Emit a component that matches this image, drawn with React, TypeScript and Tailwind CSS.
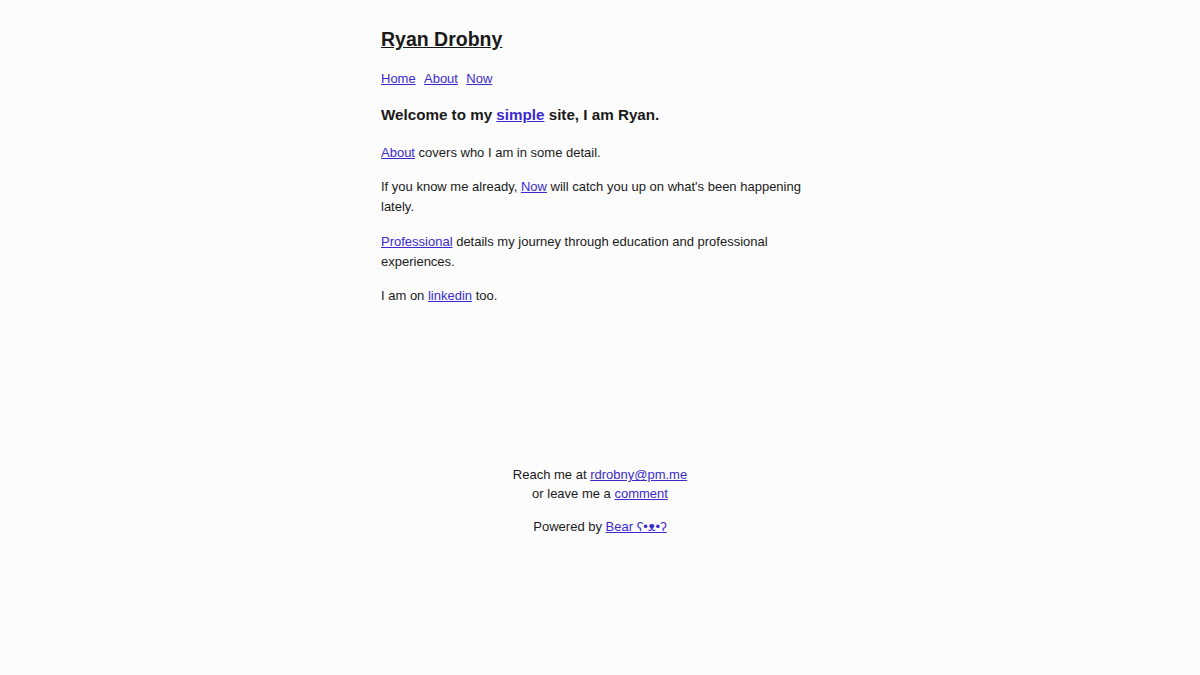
import React from 'react';

const linkCls = 'text-[#3a2bcc] underline';

export default function App() {
  return (
    <div className="min-h-screen bg-[#fcfcfc] text-[#1a1a1a] text-[13px] font-['Liberation_Sans',Arial,sans-serif]">
      <div className="w-[438px] mx-auto pt-[25px]">
        <header>
          <a href="#" className="text-[#1a1a1a] underline">
            <h1 className="text-[19.5px] leading-[29px] font-bold">Ryan Drobny</h1>
          </a>
          <nav className="mt-[15px] flex gap-[8.3px] leading-[19.5px]">
            <a href="#" className={linkCls}>Home</a>
            <a href="#" className={linkCls}>About</a>
            <a href="#" className={linkCls}>Now</a>
          </nav>
        </header>

        <main className="leading-[20.5px]">
          <h2 className="mt-[15px] text-[15.2px] leading-[22.8px] font-bold">
            Welcome to my <a href="#" className={linkCls}>simple</a> site, I am Ryan.
          </h2>
          <p className="mt-[17px]">
            <a href="#" className={linkCls}>About</a> covers who I am in some detail.
          </p>
          <p className="mt-[13px]">
            If you know me already, <a href="#" className={linkCls}>Now</a> will catch you up on
            what's been happening lately.
          </p>
          <p className="mt-[14px]">
            <a href="#" className={linkCls}>Professional</a> details my journey through education and
            professional experiences.
          </p>
          <p className="mt-[13px]">
            I am on <a href="#" className={linkCls}>linkedin</a> too.
          </p>
        </main>
      </div>

      <footer className="mt-[159px] text-center leading-[19px]">
        <p>
          Reach me at <a href="#" className={linkCls}>rdrobny@pm.me</a>
          <br />
          or leave me a <a href="#" className={linkCls}>comment</a>
        </p>
        <p className="mt-[14px]">
          Powered by <a href="#" className={linkCls}>Bear ʕ•ᴥ•ʔ</a>
        </p>
      </footer>
    </div>
  );
}
